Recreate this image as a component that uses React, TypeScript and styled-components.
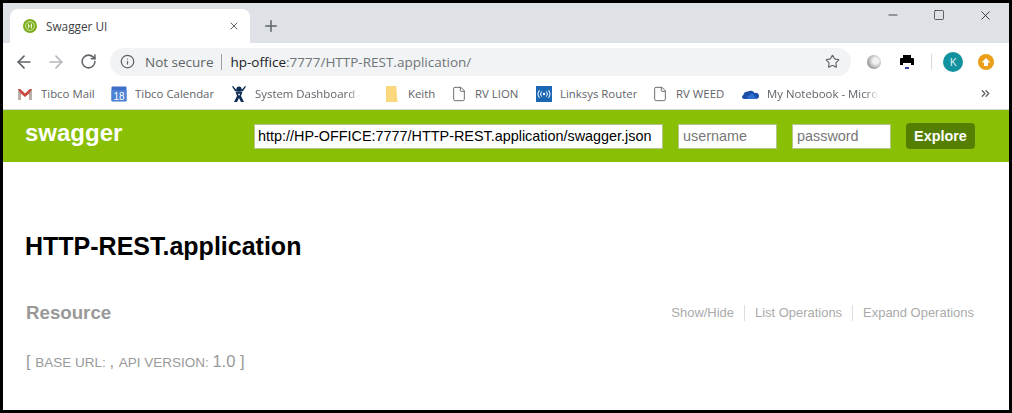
import React from 'react';
import styled, { createGlobalStyle } from 'styled-components';
import { ArrowLeft, ArrowRight, RotateCw, Info, Star, X, Plus, Minus, Square, File, ChevronsRight } from 'lucide-react';

const GlobalStyle = createGlobalStyle`
  html, body {
    margin: 0;
    padding: 0;
    background: #fff;
  }
  * {
    box-sizing: border-box;
  }
`;

const bookmarks = [
  { label: 'Tibco Mail', icon: 'gmail', width: 94 },
  { label: 'Tibco Calendar', icon: 'calendar', width: 120 },
  { label: 'System Dashboard - T', icon: 'jira', width: 155, clip: 106 },
  { label: 'Keith', icon: 'folder', width: 65 },
  { label: 'RV LION', icon: 'file', width: 85 },
  { label: 'Linksys Router', icon: 'wifi', width: 116 },
  { label: 'RV WEED', icon: 'file', width: 90 },
  { label: 'My Notebook - Microsoft', icon: 'cloud', width: 140, clip: 112 }
];

const BookmarkIcon = ({ kind }: { kind: string }) => {
  switch (kind) {
    case 'gmail':
      return (
        <svg width="16" height="14" viewBox="0 0 16 14">
          <path d="M1 2h2.2L8 6.6 12.8 2H15v11h-2.6V6.2L8 10 3.6 6.2V13H1z" fill="#c9463c" />
          <path d="M3.6 6.2V13H1V2z" fill="#b8b2ad" />
          <path d="M12.4 6.2V13H15V2z" fill="#b8b2ad" />
        </svg>
      );
    case 'calendar':
      return (
        <svg width="16" height="16" viewBox="0 0 16 16">
          <rect x="0.5" y="0.5" width="15" height="15" rx="1" fill="#3f6fc6" />
          <rect x="0.5" y="4" width="15" height="11" fill="#4d82d8" />
          <text x="8" y="13.5" textAnchor="middle" fontSize="10" fontFamily="Liberation Sans" fill="#fff">18</text>
        </svg>
      );
    case 'jira':
      return (
        <svg width="16" height="18" viewBox="0 0 16 18">
          <circle cx="8" cy="4" r="2.6" fill="#0c2a52" />
          <path d="M1 1.5 4 6h8l3-4.5-1-.5-3 3.6H5L2 1z" fill="#0c2a52" />
          <path d="M4.5 6.5h7L10 11l3 6h-3L8 13l-2 4H3l3-6z" fill="#0c2a52" />
          <circle cx="8" cy="9.5" r="1" fill="#d8e2ef" />
        </svg>
      );
    case 'folder':
      return (
        <svg width="14" height="16" viewBox="0 0 14 16">
          <path d="M0 0h10.5l.5 12.5 3 .5v3H0z" fill="#fbd77e" />
          <path d="M10.5 0 14 0v16h-2.5z" fill="#fff" />
        </svg>
      );
    case 'file':
      return <File size={16} color="#5f6368" strokeWidth={1.4} />;
    case 'wifi':
      return (
        <svg width="16" height="16" viewBox="0 0 16 16">
          <rect width="16" height="16" fill="#1c67b4" />
          <circle cx="8" cy="8" r="1.2" fill="#fff" />
          <path d="M5.6 5.4a4 4 0 0 0 0 5.2M10.4 5.4a4 4 0 0 1 0 5.2M3.6 4a6.4 6.4 0 0 0 0 8M12.4 4a6.4 6.4 0 0 1 0 8" stroke="#fff" strokeWidth="1" fill="none" />
        </svg>
      );
    default:
      return (
        <svg width="17" height="12" viewBox="0 0 17 12">
          <path d="M5 11H2a2 2 0 0 1-.6-3.9A4 4 0 0 1 6 3.6 4.5 4.5 0 0 1 12.5 5 3.2 3.2 0 0 1 17 8c0 1.800-1.300 3-3 3z" fill="#1c4fa8" />
          <path d="M6 8.500 10 5l5 6H5z" fill="#2d6fd0" />
        </svg>
      );
  }
};

export default function App() {
  return (
    <Frame>
      <GlobalStyle />
      <TabStrip>
        <Tab>
          <Favicon>
            <svg width="14" height="14" viewBox="0 0 14 14">
              <circle cx="7" cy="7" r="7" fill="#7cad1c" />
              <circle cx="7" cy="7" r="4.400" fill="none" stroke="#d4e6a4" strokeWidth="1" />
              <path d="M5.500 4.500v5M8.500 4.500v5M5.500 7h3" stroke="#e8f2c8" strokeWidth="1" />
            </svg>
          </Favicon>
          <TabTitle>Swagger UI</TabTitle>
          <TabClose>
            <X size={12} strokeWidth={2} />
          </TabClose>
        </Tab>
        <NewTab>
          <Plus size={18} strokeWidth={2} />
        </NewTab>
        <WindowControls>
          <WindowButton>
            <Minus size={14} strokeWidth={1.300} />
          </WindowButton>
          <WindowButton>
            <Square size={12} strokeWidth={1.300} />
          </WindowButton>
          <WindowButton>
            <X size={15} strokeWidth={1.300} />
          </WindowButton>
        </WindowControls>
      </TabStrip>

      <Toolbar>
        <NavButton>
          <ArrowLeft size={20} strokeWidth={2} />
        </NavButton>
        <NavButton $disabled>
          <ArrowRight size={20} strokeWidth={2} />
        </NavButton>
        <NavButton>
          <RotateCw size={17} strokeWidth={2.200} />
        </NavButton>
        <Omnibox>
          <Info size={15} color="#5f6368" strokeWidth={2} />
          <NotSecure>Not secure</NotSecure>
          <OmniDivider />
          <Url>
            <strong>hp-office</strong>:7777/HTTP-REST.application/
          </Url>
          <OmniStar>
            <Star size={15} strokeWidth={1.800} />
          </OmniStar>
        </Omnibox>
        <Extensions>
          <GreyBall />
          <svg width="14" height="16" viewBox="0 0 14 16">
            <path d="M3 1h8v3h2a1 1 0 0 1 1 1v6h-3V9H3v2H0V5a1 1 0 0 1 1-1h2z" fill="#000" />
            <rect x="5" y="13" width="4" height="2" fill="#303f9f" />
          </svg>
          <ExtDivider />
          <Avatar>K</Avatar>
          <UpdateBadge>
            <svg width="10" height="10" viewBox="0 0 10 10">
              <path d="M5 1 9.500 5.500H7V9H3V5.500H.5z" fill="#fff" />
            </svg>
          </UpdateBadge>
        </Extensions>
      </Toolbar>

      <BookmarkBar>
        {bookmarks.map((b) => (
          <Bookmark key={b.label} $width={b.width}>
            <BookmarkIcon kind={b.icon} />
            <BookmarkLabel $clip={b.clip}>{b.label}</BookmarkLabel>
          </Bookmark>
        ))}
        <MoreBookmarks>
          <ChevronsRight size={13} strokeWidth={2.400} />
        </MoreBookmarks>
      </BookmarkBar>

      <SwaggerHeader>
        <Logo>swagger</Logo>
        <HeaderForm>
          <UrlInput defaultValue="http://HP-OFFICE:7777/HTTP-REST.application/swagger.json" />
          <AuthInput placeholder="username" />
          <AuthInput placeholder="password" />
          <ExploreButton>Explore</ExploreButton>
        </HeaderForm>
      </SwaggerHeader>

      <Main>
        <Title>HTTP-REST.application</Title>
        <ResourceRow>
          <ResourceName>Resource</ResourceName>
          <Actions>
            <Action>Show/Hide</Action>
            <Action>List Operations</Action>
            <Action>Expand Operations</Action>
          </Actions>
        </ResourceRow>
        <BaseInfo>
          [ <small>BASE URL: </small>, <small>API VERSION: </small>1.0 ]
        </BaseInfo>
      </Main>
    </Frame>
  );
}

const Frame = styled.div`
  width: 1012px;
  height: 413px;
  border: 3px solid #000;
  background: #fff;
  overflow: hidden;
  font-family: 'Open Sans', 'Liberation Sans', sans-serif;
`;

const TabStrip = styled.div`
  height: 40px;
  background: #dee1e6;
  display: flex;
  align-items: flex-end;
  padding-left: 7px;
`;

const Tab = styled.div`
  width: 240px;
  height: 34px;
  background: #fff;
  border-radius: 8px 8px 0 0;
  display: flex;
  align-items: center;
  padding: 0 13px;
  gap: 9px;
`;

const Favicon = styled.span`
  display: flex;
`;

const TabTitle = styled.span`
  flex: 1;
  font-size: 11.800px;
  color: #3c4043;
`;

const TabClose = styled.span`
  display: flex;
  color: #5f6368;
  margin-right: -3px;
`;

const NewTab = styled.span`
  display: flex;
  color: #5f6368;
  margin: 0 0 8px 12px;
`;

const WindowControls = styled.div`
  display: flex;
  margin-left: auto;
  align-self: flex-start;
  margin-right: 1px;
`;

const WindowButton = styled.span`
  width: 46px;
  height: 24px;
  display: flex;
  align-items: center;
  justify-content: center;
  color: #1a1a1a;
`;

const Toolbar = styled.div`
  height: 37px;
  display: flex;
  align-items: center;
  padding-left: 5px;
  background: #fff;
`;

const NavButton = styled.span<{ $disabled?: boolean }>`
  width: 32px;
  display: flex;
  justify-content: center;
  color: ${(p) => (p.$disabled ? '#b4b7bb' : '#5f6368')};
`;

const Omnibox = styled.div`
  width: 741px;
  height: 28px;
  margin-left: 6px;
  border-radius: 14px;
  background: #f1f3f4;
  display: flex;
  align-items: center;
  padding: 0 10px 0 10px;
`;

const NotSecure = styled.span`
  margin-left: 10px;
  font-size: 13.500px;
  color: #5f6368;
`;

const OmniDivider = styled.span`
  width: 1px;
  height: 16px;
  margin: 0 8px;
  background: #9aa0a6;
`;

const Url = styled.span`
  flex: 1;
  font-size: 13.500px;
  color: #70757a;
  strong {
    font-weight: 400;
    color: #202124;
  }
`;

const OmniStar = styled.span`
  display: flex;
  color: #5f6368;
  margin-right: 1px;
`;

const Extensions = styled.div`
  flex: 1;
  display: flex;
  align-items: center;
  padding-left: 16px;
  gap: 17px;
`;

const GreyBall = styled.span`
  width: 14px;
  height: 14px;
  margin-right: 2px;
  border-radius: 50%;
  background: radial-gradient(circle at 62% 42%, #f0f0f0 25%, #9a9a9a 70%);
`;

const ExtDivider = styled.span`
  width: 1px;
  height: 16px;
  background: #d6d8da;
`;

const Avatar = styled.span`
  width: 20px;
  height: 20px;
  margin-left: -6px;
  border-radius: 50%;
  background: #12929f;
  color: #e6f5f6;
  font-size: 11px;
  display: flex;
  align-items: center;
  justify-content: center;
`;

const UpdateBadge = styled.span`
  width: 16px;
  height: 16px;
  margin-left: -2px;
  border-radius: 50%;
  background: #eb9f18;
  display: flex;
  align-items: center;
  justify-content: center;
`;

const BookmarkBar = styled.div`
  height: 30px;
  display: flex;
  align-items: center;
  padding: 0 0 2px 14px;
  background: #fff;
  border-bottom: 1px solid #d4d6d2;
`;

const Bookmark = styled.div<{ $width: number }>`
  width: ${(p) => p.$width}px;
  display: flex;
  align-items: center;
  gap: 8px;
  overflow: hidden;
  flex-shrink: 0;
`;

const BookmarkLabel = styled.span<{ $clip?: number }>`
  font-size: 11.400px;
  color: #5f6368;
  white-space: nowrap;
  overflow: hidden;
  ${(p) =>
    p.$clip
      ? `
    max-width: ${p.$clip}px;
    mask-image: linear-gradient(to right, #000 88%, transparent);
  `
      : ''}
`;

const MoreBookmarks = styled.span`
  display: flex;
  margin-left: auto;
  margin-right: 17px;
  color: #5f6368;
`;

const SwaggerHeader = styled.header`
  height: 52px;
  background: #89bf04;
  display: flex;
  align-items: center;
  justify-content: space-between;
  padding: 0 34px 0 22px;
  font-family: 'Liberation Sans', Arial, sans-serif;
`;

const Logo = styled.span`
  font-size: 24px;
  font-weight: 700;
  color: #fff;
  position: relative;
  top: -3px;
`;

const HeaderForm = styled.div`
  display: flex;
  align-items: center;
  gap: 15px;
`;

const UrlInput = styled.input`
  width: 409px;
  height: 25px;
  border: 1px solid #b4c48c;
  padding: 0 3px;
  font-family: inherit;
  font-size: 14.400px;
  color: #000;
  outline: none;
`;

const AuthInput = styled.input`
  width: 99px;
  height: 25px;
  border: 1px solid #b4c48c;
  padding: 0 4px;
  font-family: inherit;
  font-size: 14.400px;
  outline: none;
  &::placeholder {
    color: #777;
  }
`;

const ExploreButton = styled.button`
  width: 69px;
  height: 26px;
  border: none;
  border-radius: 4px;
  background: #547f00;
  color: #fff;
  font-family: inherit;
  font-size: 14.400px;
  font-weight: 700;
  padding: 0;
`;

const Main = styled.main`
  font-family: 'Liberation Sans', Arial, sans-serif;
  padding: 69px 35px 0 22px;
`;

const Title = styled.h1`
  margin: 0;
  font-size: 25px;
  line-height: 30px;
  font-weight: 700;
  color: #000;
`;

const ResourceRow = styled.div`
  display: flex;
  justify-content: space-between;
  align-items: center;
  margin-top: 40px;
  padding-left: 1px;
`;

const ResourceName = styled.h2`
  margin: 0;
  font-size: 18.700px;
  line-height: 24px;
  font-weight: 700;
  color: #999;
`;

const Actions = styled.div`
  display: flex;
`;

const Action = styled.span`
  font-size: 12.960px;
  line-height: 16px;
  color: #aaa;
  padding: 0 10px;
  border-right: 1px solid #ddd;
  &:last-child {
    border-right: none;
    padding-right: 0;
  }
`;

const BaseInfo = styled.div`
  margin-top: 26px;
  padding-left: 1px;
  font-size: 16.500px;
  line-height: 20px;
  color: #999;
  small {
    font-size: 13.500px;
  }
`;
